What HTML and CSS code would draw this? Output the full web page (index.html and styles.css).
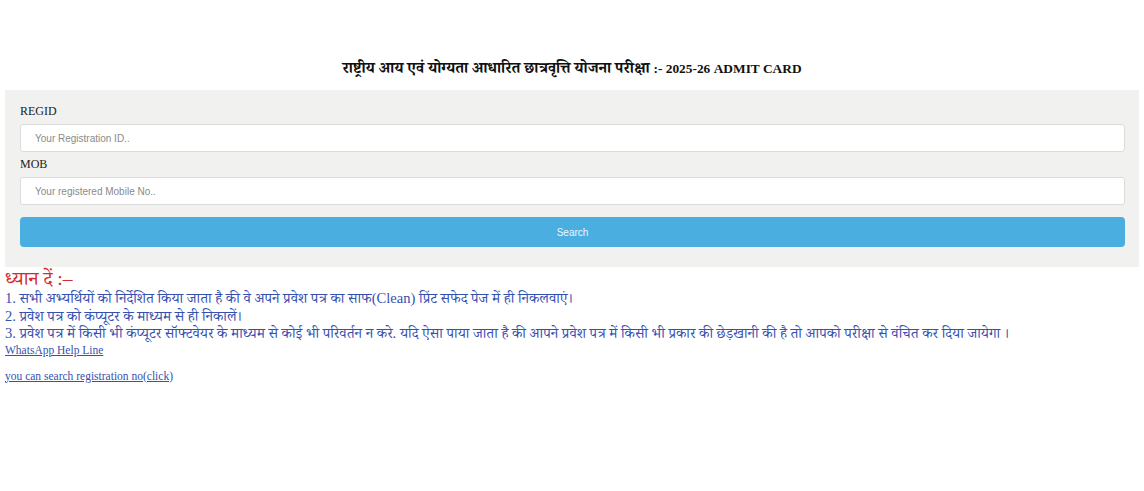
FILE: index.html
```html
<!DOCTYPE html>
<html lang="hi">
<head>
<meta charset="utf-8">
<title>Admit Card</title>
<link rel="stylesheet" href="styles.css">
</head>
<body>
<h1 class="title">राष्ट्रीय आय एवं योग्यता आधारित छात्रवृत्ति योजना परीक्षा <span class="latin">:- 2025-26 ADMIT CARD</span></h1>
<form class="panel">
  <label class="lbl" for="regid">REGID</label>
  <input class="field" id="regid" type="text" placeholder="Your Registration ID..">
  <label class="lbl" for="mob">MOB</label>
  <input class="field last" id="mob" type="text" placeholder="Your registered Mobile No..">
  <button class="btn" type="button">Search</button>
</form>
<div class="notes">
  <div class="attn">ध्यान दें :–</div>
  <div class="line">1. सभी अभ्यर्थियों को निर्देशित किया जाता है की वे अपने प्रवेश पत्र का साफ(Clean) प्रिंट सफेद पेज में ही निकलवाएं।</div>
  <div class="line">2. प्रवेश पत्र को कंप्यूटर के माध्यम से ही निकालें।</div>
  <div class="line">3. प्रवेश पत्र में किसी भी कंप्यूटर सॉफ्टवेयर के माध्यम से कोई भी परिवर्तन न करे. यदि ऐसा पाया जाता है की आपने प्रवेश पत्र में किसी भी प्रकार की छेड़खानी की है तो आपको परीक्षा से वंचित कर दिया जायेगा ।</div>
  <a class="link" href="#">WhatsApp Help Line</a>
  <a class="link second" href="#">you can search registration no(click)</a>
</div>
</body>
</html>
```
FILE: styles.css
```css
html, body {
  margin: 0;
  padding: 0;
  background: #ffffff;
}
body {
  padding: 0 5px;
  font-family: "Liberation Serif", "Noto Serif Devanagari", "Noto Sans Devanagari", serif;
}
.title {
  margin: 0;
  padding-top: 58px;
  height: 32px;
  text-align: center;
  font-size: 15.5px;
  font-weight: bold;
  color: #111;
  line-height: 20px;
}
.title .latin {
  font-size: 13.4px;
}
.panel {
  margin: 0;
  background: #f1f1f0;
  padding: 14px 14px 20px 15px;
  display: flex;
  flex-direction: column;
}
.lbl {
  font-size: 12px;
  color: #222;
  line-height: 14px;
  height: 14px;
  margin-bottom: 6px;
}
.field {
  box-sizing: border-box;
  height: 28px;
  margin: 0 0 5px 0;
  padding: 0 14px;
  border: 1px solid #dcdcdc;
  border-radius: 3px;
  background: #fff;
  font-family: "Liberation Sans", Arial, sans-serif;
  font-size: 10px;
  color: #333;
}
.field.last {
  margin-bottom: 12px;
}
.field::placeholder {
  color: #8a8a8a;
}
.btn {
  height: 30px;
  border: none;
  border-radius: 4px;
  background: #4aaee1;
  color: #eef7fd;
  font-family: "Liberation Sans", Arial, sans-serif;
  font-size: 10px;
}
.notes {
  display: flex;
  flex-direction: column;
  align-items: flex-start;
  padding-top: 1px;
}
.attn {
  color: #d42b2b;
  font-size: 19.5px;
  line-height: 22px;
}
.line {
  color: #3650b0;
  font-size: 14.6px;
  line-height: 17.5px;
}
.link {
  color: #3650b0;
  font-size: 11.5px;
  line-height: 14px;
  text-decoration: underline;
}
.link.second {
  margin-top: 12px;
}
```
